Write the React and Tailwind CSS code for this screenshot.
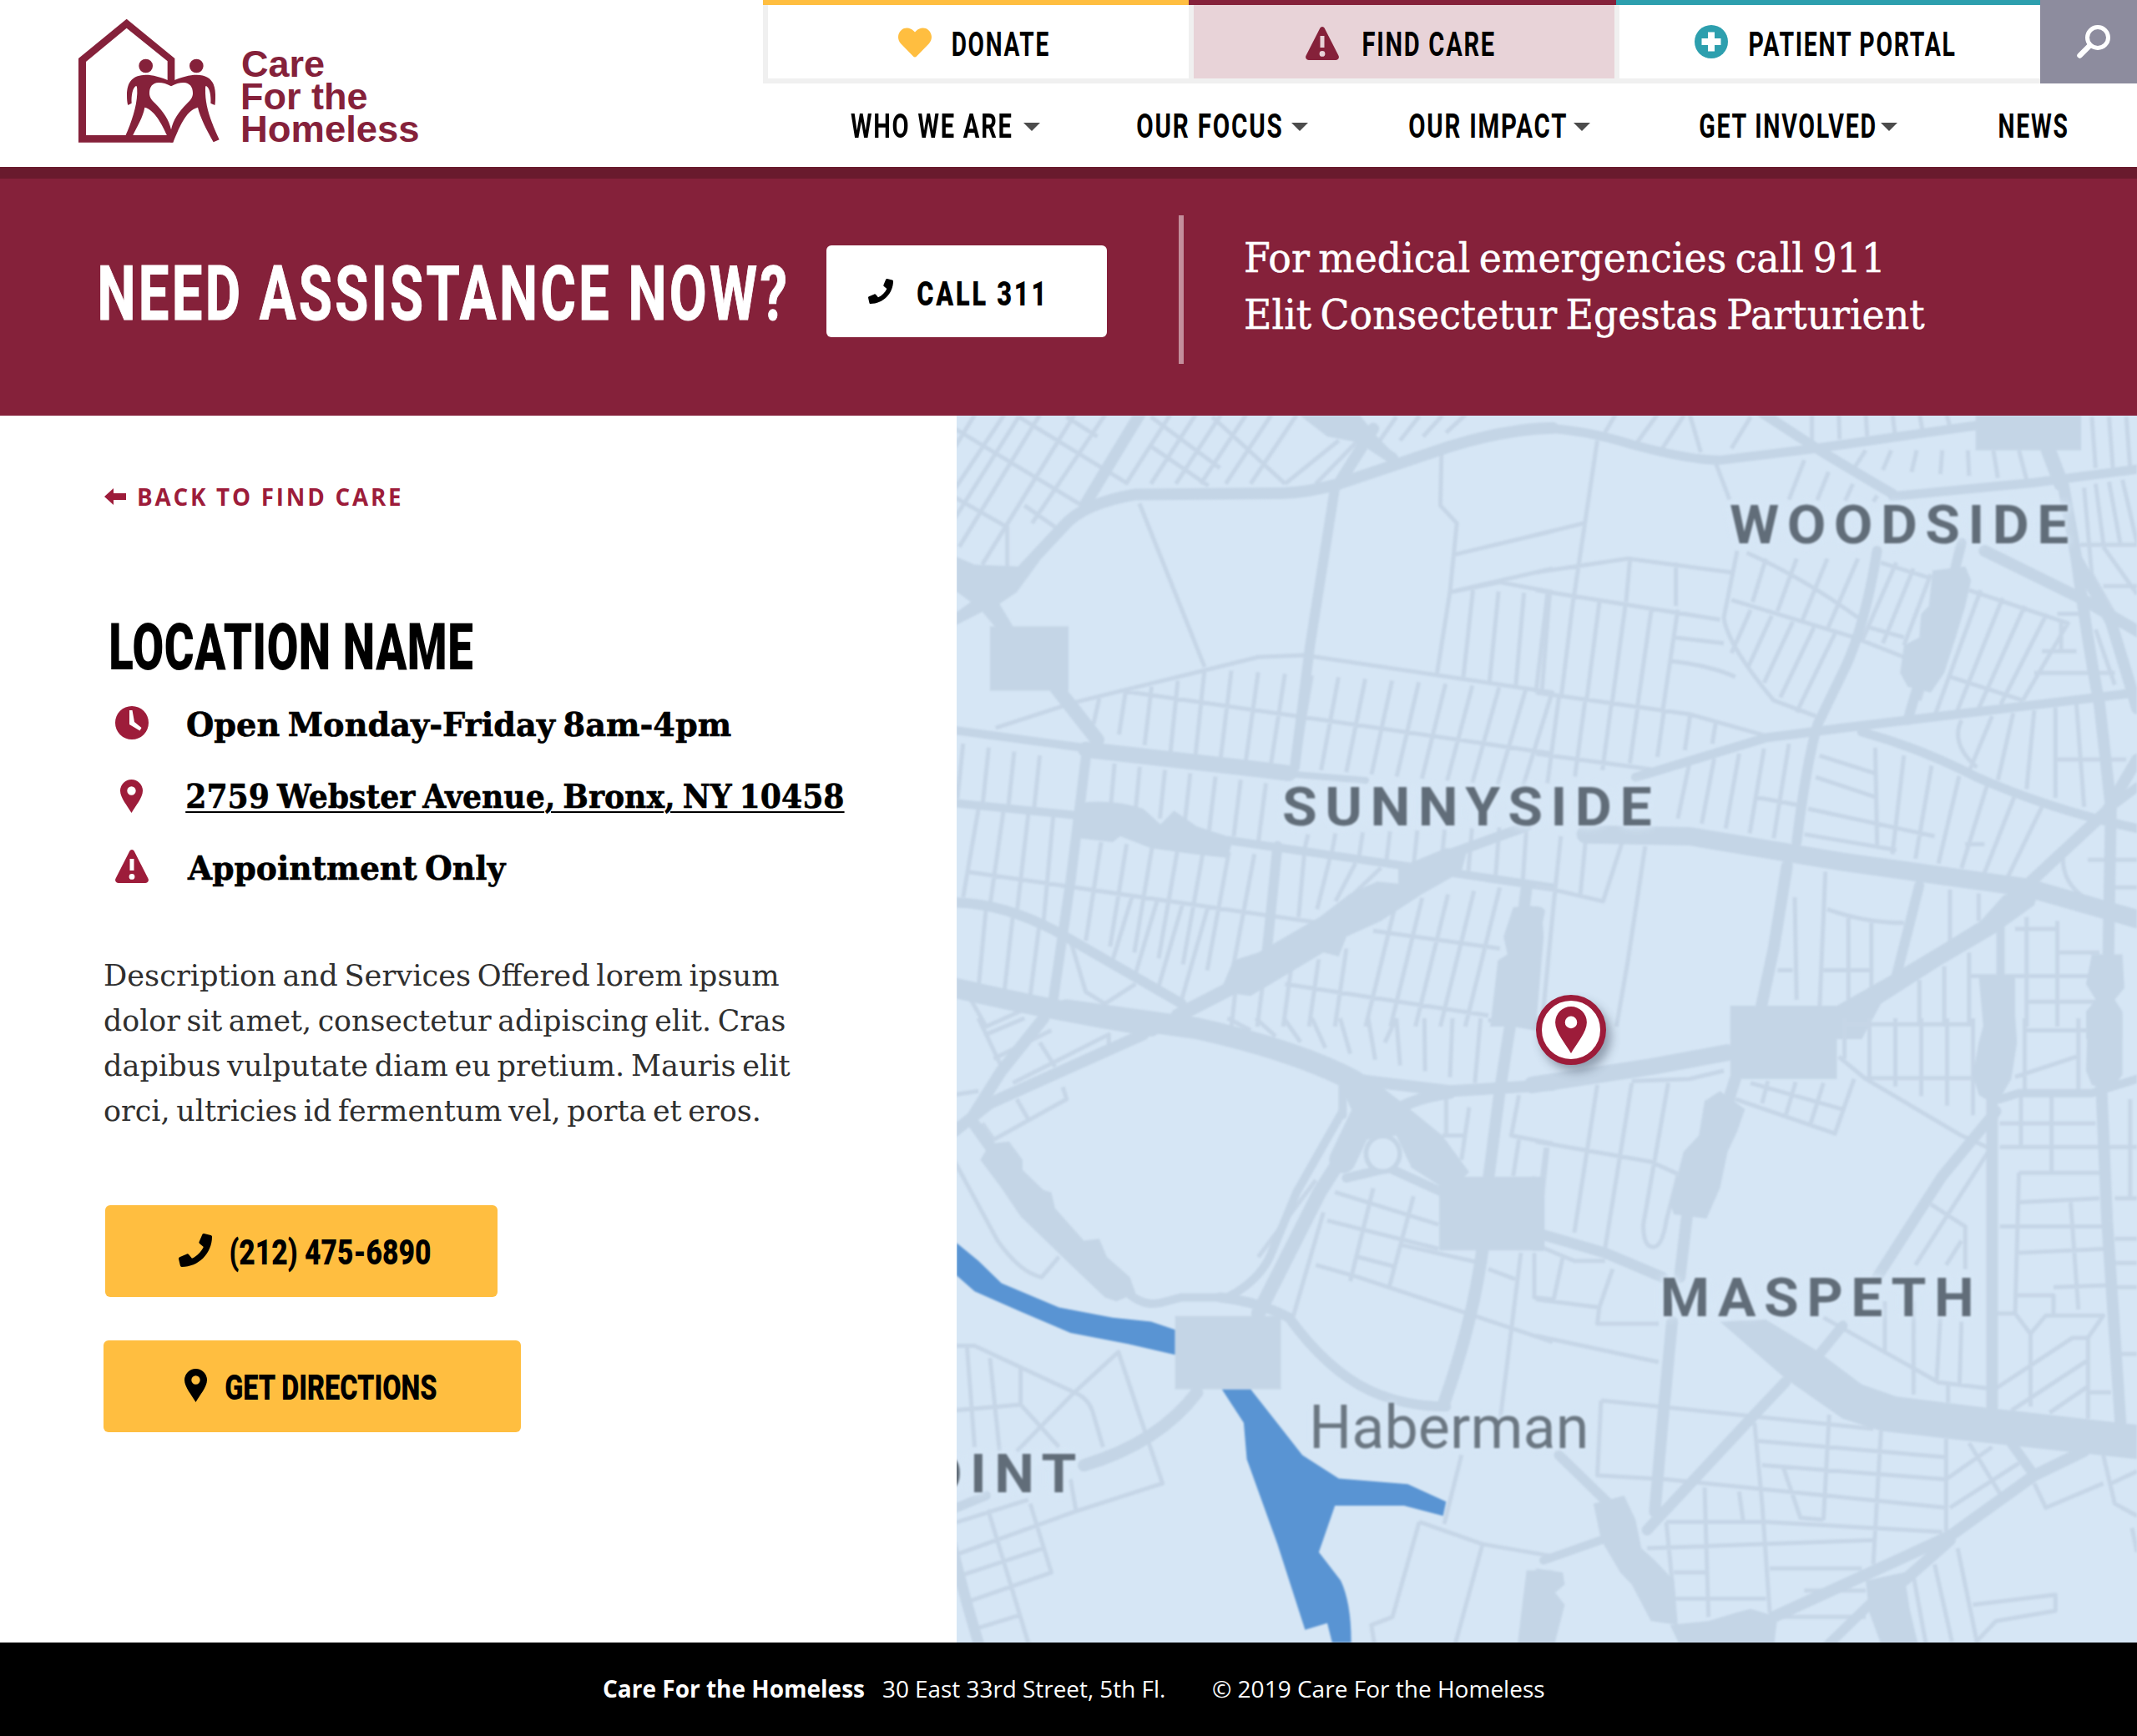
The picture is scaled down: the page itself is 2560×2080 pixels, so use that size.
import React, { useLayoutEffect, useRef, useState } from "react";
import { FaPhone, FaHeart } from "react-icons/fa";

/* One line of text whose inked width is set to `width`. */
function Fit({ width, className = "", children }) {
  const ref = useRef(null);
  const [t, setT] = useState({ s: 1, x: 0 });
  useLayoutEffect(() => {
    const el = ref.current;
    const cs = getComputedStyle(el);
    const ctx = document.createElement("canvas").getContext("2d");
    ctx.font = `${cs.fontWeight} ${cs.fontSize} ${cs.fontFamily}`;
    ctx.letterSpacing = cs.letterSpacing === "normal" ? "0px" : cs.letterSpacing;
    ctx.wordSpacing = cs.wordSpacing === "normal" ? "0px" : cs.wordSpacing;
    const m = ctx.measureText(children);
    const k = el.offsetWidth / m.width;
    const ink = (m.actualBoundingBoxLeft + m.actualBoundingBoxRight) * k;
    const s = width / ink;
    setT({ s, x: m.actualBoundingBoxLeft * k * s });
  }, [width, children]);
  return (
    <span className="block shrink-0" style={{ width }}>
      <span
        ref={ref}
        className={"inline-block origin-left whitespace-nowrap " + className}
        style={{ transform: `translateX(${t.x}px) scaleX(${t.s})` }}
      >
        {children}
      </span>
    </span>
  );
}

const Alert = ({ className }) => (
  <svg viewBox="0 0 40 40" className={className} fill="currentColor">
    <path
      fillRule="evenodd"
      d="M17.4 1.6a3 3 0 0 1 5.2 0L39.4 34.5a3.6 3.6 0 0 1-3.2 5.4H3.8a3.6 3.6 0 0 1-3.2-5.4ZM17.5 11v14h5V11Zm2.5 18a3.4 3.4 0 1 0 0 6.8a3.4 3.4 0 0 0 0-6.8Z"
    />
  </svg>
);

const Pin = ({ className }) => (
  <svg viewBox="0 0 27 40" className={className} fill="currentColor">
    <path
      fillRule="evenodd"
      d="M13.500 40C9 32 0 22 0 13.500a13.500 13.500 0 0 1 27 0C27 22 18 32 13.500 40ZM13.500 8.300a5.200 5.200 0 1 0 0 10.400a5.200 5.200 0 0 0 0-10.400Z"
    />
  </svg>
);

const Clock = () => (
  <svg viewBox="0 0 40 40" className="h-10 w-10" fill="currentColor">
    <path
      fillRule="evenodd"
      d="M20 0a20 20 0 1 0 0 40a20 20 0 0 0 0-40ZM17 5H20.500L23 19L31.500 26L29.500 29.500L17 22Z"
    />
  </svg>
);

const Caret = () => (
  <svg viewBox="0 0 20 10" className="h-[10px] w-5 shrink-0" fill="#4c4c4c">
    <path d="M0 0H20L10 10Z" />
  </svg>
);

function Logo() {
  return (
    <div className="flex">
      <svg viewBox="102 66 510 450" className="mt-[22px] h-[150px] w-[170px]" fill="#85213a">
        <path d="M102 210L275 68L448 210V288L434 300L422 291V220L275 101L129 222V486H434L442 512H102Z" />
        <circle cx="344" cy="237" r="25" />
        <circle cx="526" cy="237" r="25" />
        <path d="M435 292C395 277 370 269 343 269C300 270 277 290 276 340C276 358 277 370 280 378L293 371C291 342 297 315 309 309C313 308 313 322 313 335C311 385 293 438 270 490H296C312 455 334 422 340 386C372 392 402 445 420 487L434 512L442 510L435 466C427 430 408 402 378 372C368 362 357 352 357 335C357 312 368 298 390 297C405 297 420 301 435 310Z" />
        <path d="M435 292C475 277 500 269 527 269C570 270 593 290 594 340C594 358 594 370 592 378L577 371C579 342 573 315 561 309C557 308 558 322 558 335C560 390 580 440 608 502L587 511C562 465 540 425 531 386C485 398 462 465 442 512L428 500L435 466C443 430 462 402 492 372C502 362 513 352 513 335C513 312 502 298 480 297C465 297 450 301 435 310Z" />
      </svg>
      <div className="ml-[26px] mt-[57px] font-['Liberation_Sans',sans-serif] text-[45px] font-bold leading-[39px] text-[#85213a]">
        <Fit width={98}>Care</Fit>
        <div className="pl-[1px]"><Fit width={149}>For the</Fit></div>
        <div className="pl-[1px]"><Fit width={211}>Homeless</Fit></div>
      </div>
    </div>
  );
}

const NAV = [
  { label: "WHO WE ARE", w: 193, gap: "ml-[14px]", pad: "pl-[105px]" },
  { label: "OUR FOCUS", w: 173, gap: "ml-[12px]", pad: "pl-[116px]" },
  { label: "OUR IMPACT", w: 188, gap: "ml-[9px]", pad: "pl-[121px]" },
  { label: "GET INVOLVED", w: 210, gap: "ml-[7px]", pad: "pl-[131px]" },
  { label: "NEWS", w: 81, gap: null, pad: "pl-[122px]" },
];

function Header() {
  const tab = "flex flex-1 items-center border-b-[6px] border-l-[6px] border-[#f0f0f0] pt-[6px]";
  return (
    <header className="flex h-[200px] justify-between bg-white pl-[94px]">
      <Logo />
      <div className="w-[1646px] font-[Roboto,sans-serif] text-[41px] font-bold leading-[48px] tracking-[0.06em] text-black">
        <div className="flex h-[100px]">
          <div className="flex w-[510px] flex-col">
            <div className="h-[6px] bg-[#ffbe40]" />
            <div className={tab + " pl-[156px]"}>
              <FaHeart className="-mt-[4px] h-10 w-10 text-[#ffbe40]" />
              <div className="ml-[25px]"><Fit width={115.5}>DONATE</Fit></div>
            </div>
          </div>
          <div className="flex w-[512px] flex-col">
            <div className="h-[6px] bg-[#85213a]" />
            <div className={tab + " bg-[#e8d3d8] pl-[134px]"}>
              <Alert className="-mt-[2px] h-10 w-10 text-[#85213a]" />
              <div className="ml-[29px]"><Fit width={157}>FIND CARE</Fit></div>
            </div>
          </div>
          <div className="flex w-[508px] flex-col">
            <div className="h-[6px] bg-[#2d9fae]" />
            <div className={tab + " -ml-[2px] bg-white pl-[90px]"}>
              <svg viewBox="0 0 40 40" className="-mt-[6px] h-10 w-10">
                <circle cx="20" cy="20" r="20" fill="#2d9fae" />
                <path d="M16 8.500H24V16H31.500V24H24V31.500H16V24H8.500V16H16Z" fill="#fff" />
              </svg>
              <div className="ml-[26px]"><Fit width={246}>PATIENT PORTAL</Fit></div>
            </div>
          </div>
          <div className="flex w-[116px] items-center justify-center bg-[#8d8c9e] pl-3">
            <svg viewBox="0 0 40 40" className="h-10 w-10" fill="none" stroke="#fff">
              <circle cx="25" cy="15" r="12.500" strokeWidth="5" />
              <path d="M15.500 24.500L3.500 36.500" strokeWidth="6.500" strokeLinecap="round" />
            </svg>
          </div>
        </div>
        <nav className="flex h-[100px] items-center pt-[2px]">
          {NAV.map((n) => (
            <div key={n.label} className={"flex items-center " + n.pad}>
              <Fit width={n.w}>{n.label}</Fit>
              {n.gap && <div className={n.gap + " mt-[2px]"}><Caret /></div>}
            </div>
          ))}
        </nav>
      </div>
    </header>
  );
}

function Banner() {
  return (
    <section className="flex h-[298px] items-start border-t-[14px] border-[#691a2d] bg-[#85213a] pl-[120px]">
      <h1 className="mt-[88px] font-[Roboto,sans-serif] text-[91px] font-bold leading-[100px] tracking-[0.05em] text-white">
        <Fit width={821} className="[-webkit-text-stroke:1px_#ffffff]">NEED ASSISTANCE NOW?</Fit>
      </h1>
      <div className="ml-[49px] mt-[80px] flex h-[110px] w-[336px] items-center rounded-[6px] bg-white pl-[50px] font-[Roboto,sans-serif] text-[41px] font-black tracking-[0.09em] text-black">
        <FaPhone className="h-[30px] w-[30px]" />
        <div className="ml-[29px] mt-[8px]"><Fit width={149}>CALL 311</Fit></div>
      </div>
      <div className="ml-[86px] mt-[44px] h-[178px] w-[6px] bg-[#c48f9c]" />
      <div className="ml-[74px] mt-[61px] font-['DejaVu_Serif',serif] text-[48px] leading-[68px] text-white [word-spacing:-0.09em]">
        <Fit width={761} className="[-webkit-text-stroke:0.5px_#ffffff]">For medical emergencies call 911</Fit>
        <Fit width={813} className="[-webkit-text-stroke:0.5px_#ffffff]">Elit Consectetur Egestas Parturient</Fit>
      </div>
    </section>
  );
}

function Details() {
  const row = "flex h-[86px] items-center pl-[138px] text-[#9d1c3a]";
  const txt = "ml-[46px] text-black";
  const heavy = "[-webkit-text-stroke:0.6px_#000000]";
  return (
    <div className="flex w-[1146px] shrink-0 flex-col items-start bg-white">
      <a className="ml-[125px] mt-[77px] flex h-10 items-center font-['Open_Sans',sans-serif] text-[28px] font-bold leading-10 tracking-[0.1em] text-[#9d1c3a]">
        <svg viewBox="0 0 26 20" className="mr-[15px] h-5 w-[26px]" fill="currentColor">
          <path d="M0 10L11 0V6H26V14H11V20Z" />
        </svg>
        <Fit width={314}>BACK TO FIND CARE</Fit>
      </a>
      <h2 className="ml-[133px] mt-[116px] font-[Roboto,sans-serif] text-[77px] font-black leading-[90px] tracking-[0.01em] text-black">
        <Fit width={433}>LOCATION NAME</Fit>
      </h2>
      <div className="mt-[4px] font-['DejaVu_Serif',serif] text-[40px] font-bold leading-[60px] [word-spacing:-0.1em]">
        <div className={row}>
          <div className="-mt-1"><Clock /></div>
          <div className={txt}><Fit width={652} className={heavy}>Open Monday-Friday 8am-4pm</Fit></div>
        </div>
        <div className={row}>
          <div className="flex w-[39px] justify-center"><Pin className="h-10 w-[27px]" /></div>
          <div className="ml-[47px] text-black">
            <Fit width={786} className={heavy + " underline decoration-2 underline-offset-[4px]"}>2759 Webster Avenue, Bronx, NY 10458</Fit>
          </div>
        </div>
        <div className={row}>
          <div className="-mt-1"><Alert className="h-10 w-10" /></div>
          <div className={txt}><Fit width={383} className={heavy}>Appointment Only</Fit></div>
        </div>
      </div>
      <div className="ml-[125px] mt-[59px] font-['DejaVu_Serif',serif] text-[36px] leading-[54px] text-[#2f2f2f] [word-spacing:-0.1em]">
        <Fit width={808}>Description and Services Offered lorem ipsum</Fit>
        <Fit width={815}>dolor sit amet, consectetur adipiscing elit. Cras</Fit>
        <Fit width={822}>dapibus vulputate diam eu pretium. Mauris elit</Fit>
        <Fit width={784}>orci, ultricies id fermentum vel, porta et eros.</Fit>
      </div>
      <div className="font-[Roboto,sans-serif] text-[43px] font-black leading-[50px] text-black">
        <div className="ml-[126px] mt-[86px] flex h-[110px] w-[470px] items-center rounded-[6px] bg-[#ffbe40] pl-[88px]">
          <FaPhone className="-mt-[2px] h-10 w-10" />
          <div className="ml-[22px] mt-[1px]"><Fit width={240}>(212) 475-6890</Fit></div>
        </div>
        <div className="ml-[124px] mt-[52px] flex h-[110px] w-[500px] items-center rounded-[6px] bg-[#ffbe40] pl-[97px]">
          <Pin className="-mt-[2px] h-10 w-[27px]" />
          <div className="ml-[22px] mt-[1px]"><Fit width={253}>GET DIRECTIONS</Fit></div>
        </div>
      </div>
    </div>
  );
}

/* Evenly spaced cross streets between two street edges. */
function rungs(a, b, n) {
  let d = "";
  for (let i = 0; i <= n; i++) {
    const f = i / n;
    d += `M${a[0] + (a[2] - a[0]) * f} ${a[1] + (a[3] - a[1]) * f}L${b[0] + (b[2] - b[0]) * f} ${b[1] + (b[3] - b[1]) * f}`;
  }
  return d;
}

const QUADS = [
  {
    t: "translate(1140 490) scale(0.4592 0.4719)",
    roads: [
      [14, "M165 430L290 300Q340 240 480 217L860 214Q930 212 1010 190L1300 95Q1450 50 1568 48"],
      [14, "M490 15Q430 110 350 240M1100 50L1010 190M1080 80L1150 125"],
      [17, "M275 710L380 840"],
      [10, "M0 815L380 865"],
      [19, "M350 865L800 915L880 925"],
      [8, "M860 925L1080 943"],
      [12, "M1000 200L935 600L895 910"],
      [10, "M0 1000L340 1033M720 1095L1180 1160L1568 1215"],
      [12, "M352 870L310 1200L265 1500M850 1110L820 1400"],
      [12, "M0 1253Q130 1253 270 1325L600 1510M1300 1130L1500 1060"],
      [17, "M590 1540L770 1450"],
      [24, "M0 1468Q250 1525 520 1568"],
      [14, "M1500 1215L1490 1290"],
    ],
    fills: "M0 370L60 395L180 400L230 385L170 465L125 495L165 560L115 555L80 515L0 555V525L50 490L0 455ZM100 552H305V715H100ZM900 10H1060L1110 70L1160 120L1060 85L980 70ZM335 1000Q420 990 500 1015L545 1055L580 1020L640 1060L735 1090L720 1140Q620 1130 520 1115L440 1085L420 1100L330 1090ZM1465 1265Q1545 1255 1548 1275L1530 1360L1525 1568H1405L1425 1400L1450 1385L1440 1340ZM735 1400L800 1380L960 1290L1040 1230L1110 1200L1165 1205V1165L1290 1115L1345 1120L1330 1175L1230 1230L1120 1300L1030 1340L1010 1390L970 1380L850 1450L780 1490L700 1480Z",
    thin:
      "M140 10L0 215M230 15L20 350M320 15L80 395M400 15L210 290M60 15L0 110M175 20L0 290M0 45L340 245M0 220L145 300V400M175 20L460 190M190 245L270 300M300 20L380 70M520 95L670 195M680 20L870 190M520 20L700 150M490 240L660 655M115 810L320 745L800 630L920 625L1568 720M440 715L1568 875M1278 110L1275 245L1318 290L1300 465L1265 680M1310 370L1568 310M1300 465L1568 405M1300 465L1430 440L1568 465M40 1175L960 1305M1100 1325L1430 1370M870 1460L1400 1540M310 1350L350 1480L400 1510L480 1460M50 1500L90 1568L200 1520" +
      rungs([570, 15, 900, 15], [455, 190, 780, 190], 5) + rungs([1010, 80, 1060, 80], [870, 190, 950, 190], 1) +
      rungs([1160, 20, 1340, 15], [1110, 90, 1290, 60], 3) +
      rungs([385, 735, 590, 690], [370, 800, 570, 880], 3) + rungs([660, 660, 1568, 715], [635, 890, 1490, 960], 13) +
      rungs([1360, 460, 1560, 470], [1335, 680, 1540, 715], 3) + rungs([30, 850, 230, 880], [15, 990, 215, 1015], 3) +
      rungs([425, 900, 820, 950], [415, 1010, 800, 1100], 6) + rungs([930, 1080, 1500, 1060], [920, 1120, 1490, 1200], 8) +
      rungs([70, 1015, 265, 1035], [30, 1240, 240, 1300], 3) + rungs([390, 1100, 790, 1130], [350, 1350, 730, 1440], 6) +
      rungs([920, 1130, 1120, 1165], [905, 1290, 1050, 1230], 3) + rungs([90, 1265, 230, 1300], [70, 1470, 205, 1490], 2) +
      rungs([470, 1240, 670, 1260], [420, 1400, 600, 1500], 3) + rungs([1160, 1250, 1430, 1215], [1080, 1568, 1340, 1568], 4) +
      rungs([740, 1480, 1030, 1370], [730, 1568, 1000, 1568], 4),
  },
  {
    t: "translate(1840 490) scale(0.4592 0.4719)",
    roads: [
      [11, "M0 48Q120 50 250 90Q400 130 480 130L730 100L1150 42"],
      [12, "M590 10L740 105Q850 170 930 215"],
      [11, "M930 222L1300 187L1568 153"],
      [18, "M1335 100L1370 190"],
      [14, "M1375 190L1410 380L1500 540L1550 700L1568 760"],
      [14, "M1410 380Q1440 600 1470 750L1500 1010L1490 1568"],
      [12, "M890 360Q860 540 810 650L735 800Q705 900 680 1100"],
      [11, "M260 935L600 835L800 810L1568 720M850 820Q1000 860 1150 935Q1350 1020 1568 1065M1568 960L1500 1010"],
      [22, "M130 1080L400 1085L800 1150L1280 1215L1568 1295"],
      [14, "M1170 360L1420 480L1580 570"],
      [12, "M1110 340L1090 420M1000 690L970 790M1000 1210L940 1440"],
      [14, "M655 1160L620 1370L585 1530M1280 1210L1490 1020L1568 890"],
      [10, "M1212 1300V1440"],
    ],
    fills: "M1147 0H1422V105H1147ZM507 1515H785V1600H507ZM-40 1260L15 1265L20 1340L0 1568H-40ZM1035 410L1120 400L1135 435L1120 500L1095 580L1065 670L1030 720L970 705L950 670L960 600L1000 580L1005 520L1025 500ZM785 1515L940 1430L1060 1360L1160 1300L1220 1235L1320 1200L1300 1260L1200 1330L1060 1410L900 1510L850 1600H785ZM1155 1440H1250V1600H1170ZM1450 1385H1530L1535 1470L1510 1500L1530 1530V1600H1435V1530L1460 1500L1435 1460Z",
    thin:
      "M160 80L100 470M0 320L125 290M0 415L240 380L510 415M470 140L505 230M525 360L490 530Q500 600 620 740L730 780M0 460L480 535M0 720L400 775L600 830M0 875L300 915M365 390V500M245 385L235 490M350 640Q450 650 520 680M360 580L490 595M510 485L830 580L960 630M550 365Q700 430 840 530M1080 680L1270 740M1130 460L1390 545M900 390L1030 430M870 555L960 580M570 985L680 1005M740 880L885 925M730 935L885 985M710 1015L1040 1085M700 1080L940 1120M885 860L890 1110M1420 345H1568M1480 450H1568M1320 615H1410M1300 670H1510M1350 890H1540M1440 1145H1568M1510 1215H1568M1430 200L1450 420L1520 540M1480 350L1568 470M1460 560L1510 700M285 1110L240 1400L210 1568M225 1100L175 1250L0 1210M130 1090L115 1240M65 1085L50 1220L15 1568M755 1175L740 1520M760 1270Q860 1305 960 1305M815 1290V1500M875 1305V1480M675 1240L680 1500M630 1425H670M750 1425H880M1080 1220V1370M1155 1230V1300M1250 1320H1360M1360 1380H1470M1130 1440H1470M1280 1505H1480M1360 520H1430M1370 540V610M1120 1105H1170M1375 1130Q1370 1200 1430 1240M1110 790Q1080 850 1150 910" +
      rungs([210, 10, 320, 10], [180, 60, 260, 90], 1) + rungs([390, 10, 400, 10], [330, 100, 430, 110], 1) + "M560 20L510 100" +
      rungs([720, 10, 1070, 10], [720, 85, 1080, 45], 5) + rungs([860, 105, 1260, 105], [830, 150, 1280, 180], 6) +
      rungs([700, 130, 890, 220], [660, 230, 880, 235], 3) + rungs([600, 380, 840, 380], [565, 490, 760, 560], 3) +
      rungs([940, 390, 1030, 420], [850, 590, 960, 600], 2) + rungs([560, 510, 780, 570], [510, 620, 680, 770], 4) +
      rungs([30, 470, 370, 510], [0, 720, 330, 770], 5) + rungs([60, 730, 470, 790], [30, 950, 460, 850], 6) +
      rungs([1160, 460, 1390, 540], [1040, 780, 1270, 740], 4) + rungs([1070, 520, 1030, 600], [1000, 740, 1000, 740], 1) +
      rungs([400, 900, 660, 850], [370, 1040, 620, 1090], 4) + rungs([960, 880, 1320, 1010], [930, 1130, 1230, 1190], 5) +
      rungs([1190, 780, 1410, 750], [1130, 920, 1430, 1010], 4) + rungs([1460, 190, 1530, 180], [1480, 340, 1568, 340], 2) +
      rungs([1450, 20, 1540, 20], [1460, 150, 1550, 150], 2) + rungs([1280, 1290, 1360, 1300], [1280, 1568, 1360, 1568], 1) +
      rungs([1000, 1450, 1130, 1380], [1000, 1568, 1130, 1568], 2),
  },
  {
    t: "translate(1140 1220) scale(0.4592 0.4847)",
    roads: [
      [26, "M300 -20L640 25Q900 80 1050 155"],
      [14, "M1040 150L1300 180L1568 165M1130 250Q1180 200 1300 185"],
      [14, "M500 40L100 210L0 285M240 0L130 130L50 250L110 330"],
      [10, "M450 670Q500 720 560 700L600 690H720Q800 650 830 590L900 430L1020 230M1020 170V240"],
      [17, "M800 730L960 430L1060 280"],
      [32, "M1020 350L1080 230"],
      [14, "M1430 180L1400 400M1460 0L1430 180"],
      [12, "M700 690Q800 700 880 740Q980 870 1090 920Q1180 960 1290 960"],
      [15, "M1385 570Q1360 750 1285 950M640 925Q540 1050 345 1105"],
      [11, "M1030 395L1140 370L1280 430M0 1215L90 1180"],
      [13, "M0 1300Q30 1420 75 1560"],
    ],
    fills: "M583 736H859V917H583ZM1272 392H1547V574H1272ZM1500 1365H1568V1560H1475L1490 1440ZM1400 0H1568L1520 30L1400 10ZM75 350L100 310L150 305L185 350V375L240 425L260 430L270 470L345 550L385 545L405 590L465 640L480 680L430 700L400 690L300 600L180 490L130 420ZM1000 130L1080 140L1170 205L1280 290L1350 380L1300 430L1200 370L1160 290L1080 300L1040 220Z",
    thin:
      "M0 340L120 550Q180 630 235 640L280 590M0 810H60L320 925Q360 940 370 980L395 1060M40 810L60 1060M100 840L125 1070M180 865V955L280 1060M0 970L180 955M320 925L435 825L550 1150L320 1220L0 1330M320 925L170 1070M0 1250L200 1190M95 1215L205 1560M205 1200L260 1370L50 1440M0 1385L240 1310M60 1510L180 1475M310 1140L325 1220M970 480L890 740M1100 420L1040 650M1205 440L1140 670M1000 430L1270 510M980 500L1270 570M950 610L1060 640L1568 800M1060 590L1160 615M1170 560L1380 605M1400 620L1470 645M1485 580L1430 1000M1520 580V690L1568 695M1330 1080L1285 1250M1220 1245L1385 1300L1568 1330M1220 1245L1150 1480L1095 1500L1105 1560M1385 1300L1310 1560M1280 290H1340M1350 220L1330 350M1290 190V290M1480 190L1460 290L1568 310M1480 300L1465 390M1550 320L1540 400M70 0L130 120M90 40L190 0M110 100L260 30M160 160L410 40V70M230 60L270 120M80 260L110 300L300 200L290 170M170 200L200 250M0 190L70 180M1130 60L1160 0" +
      rungs([720, 0, 1380, 0], [780, 30, 1365, 160], 9) + "M800 590L950 400",
    water:
      "M0 545L70 600L130 655L280 715L420 740L520 750L583 770V832L460 805L310 778L180 725L60 675L0 625ZM705 917H780L915 1080L1010 1138L1190 1152L1290 1195L1282 1230L1180 1205H1000L958 1320L1015 1390Q1045 1450 1042 1560H997L980 1495L922 1512L850 1300L770 1090L762 1000Z",
    ring: true,
  },
  {
    t: "translate(1840 1220) scale(0.4592 0.4847)",
    roads: [
      [20, "M-10 165L300 120L500 85"],
      [14, "M520 150L500 210M395 480L375 640M355 750L330 1000L310 1220"],
      [13, "M0 530L180 580L330 640M1200 230L1060 390L890 640"],
      [14, "M1190 200V960M1475 170L1490 500L1525 1000"],
      [10, "M1210 200L1260 185H1450L1568 150M170 1290L20 1340"],
      [12, "M800 760L740 830M60 1080L190 1200M1240 1050L1300 1130M750 1560L880 1440"],
      [13, "M650 900L570 980L290 1265"],
      [14, "M620 1480L1080 1280L1300 1130L1430 1070M960 1390L1080 1290"],
    ],
    fills: "M507 -10H785V150H507ZM0 1360L70 1370L75 1400L50 1420L75 1450L45 1560H0ZM-10 390L20 395V575H-10ZM440 205L480 180L545 225L525 280L500 330L480 420L445 495L360 485L350 460L385 330L425 290ZM1175 -10H1250L1255 60L1240 150L1200 215L1155 190L1140 140L1155 60ZM1440 -10H1530V140L1500 180L1450 165L1435 130ZM150 1200L230 1180L260 1240L275 1310L310 1340L360 1390L370 1500L300 1490L250 1400L220 1370L170 1290ZM350 1500L450 1490L520 1470L560 1460L630 1480L620 1560H380ZM860 1390L960 1370L975 1460L1000 1560H905L870 1470ZM480 750L600 745L730 820L850 905L940 935L1150 960L1568 1005V1090L1080 1040L900 1020L800 990L650 890Z",
    thin:
      "M0 305L300 355L370 385M160 165L100 530M250 160L180 570M250 155L400 150L490 130M345 160L280 510Q280 570 310 565Q330 560 340 500L370 390M30 320L10 500M520 200L780 285L830 150M560 160L800 225M790 95L860 150L1110 290M860 148H1150M805 0V100M800 15H1140M1275 0V180M1415 0V180M1275 30H1440M1250 145L1410 95M1210 260H1460M1210 318H1568M1345 190V380M1265 190V320M1260 382H1470M1260 455L1470 445M1260 382L1250 730M1210 515H1480M1255 580L1490 570M1395 455L1415 720M1250 685H1350V730M1350 665L1490 660M1200 730H1250L1290 780L1330 735H1480L1440 790V990M1200 915L1400 790H1440M1240 970L1440 845M1340 975L1440 910V925H1500M1290 780V960M1510 545H1568M1510 605H1568M1500 665H1568M1520 830H1568M1550 200V440M1510 445H1568M1180 330L990 610M1110 290L1180 320M1030 460L1120 515V620M1110 550L1070 610M750 740L1050 900L1180 915M910 700V830M985 700V930M1055 740L1045 900M1110 750L1105 905M1075 900V950M70 590L45 700M0 695L165 715L200 620M165 715L160 755H320M0 785L320 850M0 560L100 600H180M170 945L880 1015M170 945L160 1130L340 1140M570 1000L590 1200L610 1470M765 980L750 1240M900 1020L880 1350M1070 1040V1270M580 1045L1070 1085M590 1105L1070 1140M340 1140L1070 1210M340 1245H600L1060 1270M290 1310L880 1290M610 1360H850M360 1435H600M700 1415H860M640 1480H860M340 1245L360 1440M440 1160L450 1480M530 1170L540 1240M645 1110L690 1235L750 1240M360 1370H450M1070 1140L1190 1060M1080 1210L1260 1100M1130 1050L1220 1190M1300 1150L1330 1210L1480 1150M1480 1080L1510 1200L1568 1230M1500 1150L1568 1120M1555 1260L1568 1320M1040 1350L1085 1540M1100 1310L1150 1540L1200 1490L1355 1465V1425L1140 1450M985 1380L1020 1560" +
      rungs([605, 155, 750, 160], [590, 210, 715, 265], 2) + rungs([870, 0, 1140, 0], [870, 145, 1140, 240], 4),
  },
];

function MapLabel({ pos, width, text, cls }) {
  return (
    <div className={"absolute " + pos}>
      <Fit width={width} className={cls}>{text}</Fit>
    </div>
  );
}

function MapPane() {
  const lab =
    "font-[Roboto,sans-serif] text-[64px] font-bold leading-[80px] tracking-[0.14em] text-[#616d79] [text-shadow:0_0_5px_#d6e6f5,0_0_8px_#d6e6f5,0_0_12px_#d6e6f5] blur-[1px]";
  return (
    <div className="relative h-[1470px] flex-1 overflow-hidden bg-[#d6e6f5]">
      <svg viewBox="1146 498 1414 1470" className="block h-[1470px] w-[1414px] blur-[1.2px]">
        {QUADS.map((q) => (
          <g key={q.t} transform={q.t}>
            <path d={q.thin} fill="none" stroke="#c6d6e7" strokeWidth="5" vectorEffect="non-scaling-stroke" strokeLinejoin="round" />
            {q.roads.map(([w, d]) => (
              <path key={d} d={d} fill="none" stroke="#c4d5e6" strokeWidth={w} vectorEffect="non-scaling-stroke" strokeLinejoin="round" strokeLinecap="round" />
            ))}
            {q.water && <path d={q.water} fill="#5994d3" />}
            <path d={q.fills} fill="#c4d5e6" />
            {q.ring && <ellipse cx="1125" cy="335" rx="44" ry="44" fill="#d6e6f5" stroke="#c4d5e6" strokeWidth="12" />}
          </g>
        ))}
      </svg>
      <MapLabel pos="left-[927px] top-[92px]" width={404} text="WOODSIDE" cls={lab} />
      <MapLabel pos="left-[392px] top-[430px]" width={440} text="SUNNYSIDE" cls={lab} />
      <MapLabel pos="left-[847px] top-[1018px]" width={368} text="MASPETH" cls={lab} />
      <MapLabel pos="-left-[38px] top-[1229px]" width={181} text="OINT" cls={lab} />
      <MapLabel
        pos="left-[427px] top-[1173px]"
        width={326}
        text="Haberman"
        cls="font-[Roboto,sans-serif] text-[72px] font-normal leading-[80px] text-[#6b7782] [text-shadow:0_0_5px_#d6e6f5,0_0_8px_#d6e6f5] blur-[1px]"
      />
      <div className="absolute left-[694px] top-[694px] flex h-[84px] w-[84px] items-center justify-center rounded-full border-[7px] border-[#9d1c3a] bg-white text-[#9d1c3a] shadow-[6px_8px_12px_rgba(60,70,90,0.45)]">
        <Pin className="h-[56px] w-[38px]" />
      </div>
    </div>
  );
}

export default function App() {
  return (
    <div className="h-[2080px] w-[2560px] overflow-hidden bg-white">
      <Header />
      <Banner />
      <main className="flex h-[1470px]">
        <Details />
        <MapPane />
      </main>
      <footer className="flex h-[112px] items-center bg-black pb-[2px] pl-[723px] font-['Open_Sans',sans-serif] text-[28px] leading-10 text-white">
        <div className="font-bold"><Fit width={312}>Care For the Homeless</Fit></div>
        <div className="ml-[23px]"><Fit width={337}>30 East 33rd Street, 5th Fl.</Fit></div>
        <div className="ml-[58px]"><Fit width={397}>© 2019 Care For the Homeless</Fit></div>
      </footer>
    </div>
  );
}
